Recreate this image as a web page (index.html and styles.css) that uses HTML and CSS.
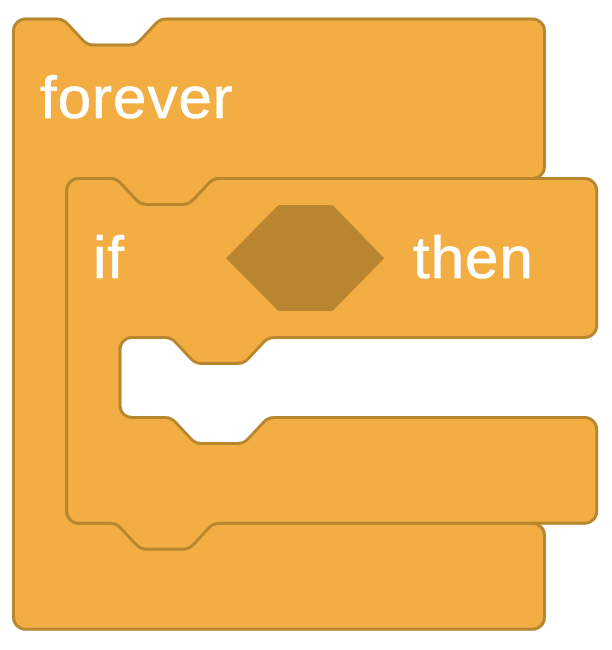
FILE: index.html
```html
<!DOCTYPE html>
<html lang="en">
<head>
<meta charset="utf-8">
<title>forever / if then</title>
<link rel="stylesheet" href="styles.css">
</head>
<body>
<div class="canvas">
  <svg class="blocks" width="612" height="650" viewBox="0 0 612 650" xmlns="http://www.w3.org/2000/svg">
    <path class="block" d="M 13.5 31 A 12 12 0 0 1 25.5 19 H 57
      c 6.06,0 9.09,3.25 12.12,6.5 l 12.12,13 c 3.03,3.25 6.06,6.5 12.12,6.5 h 36.36 c 6.06,0 9.09,-3.25 12.12,-6.5 l 12.12,-13 c 3.03,-3.25 6.06,-6.5 12.12,-6.5
      H 532.5 A 12 12 0 0 1 544.5 31 V 166.5 A 12 12 0 0 1 532.5 178.5 H 219.3
      c -6.06,0 -9.09,3.25 -12.12,6.5 l -12.12,13 c -3.03,3.25 -6.06,6.5 -12.12,6.5 h -36.36 c -6.06,0 -9.09,-3.25 -12.12,-6.5 l -12.12,-13 c -3.03,-3.25 -6.06,-6.5 -12.12,-6.5
      H 78.7 A 12 12 0 0 0 66.7 190.5 V 511.3 A 12 12 0 0 0 78.7 523.3 H 532.5 A 12 12 0 0 1 544.5 535.3 V 617.3 A 12 12 0 0 1 532.5 629.3 H 25.5 A 12 12 0 0 1 13.5 617.3 Z"/>
    <text class="label" x="40" y="118">forever</text>

    <path class="block" d="M 66.7 190.5 A 12 12 0 0 1 78.7 178.5 H 110.2
      c 6.06,0 9.09,3.25 12.12,6.5 l 12.12,13 c 3.03,3.25 6.06,6.5 12.12,6.5 h 36.36 c 6.06,0 9.09,-3.25 12.12,-6.5 l 12.12,-13 c 3.03,-3.25 6.06,-6.5 12.12,-6.5
      H 584.7 A 12 12 0 0 1 596.7 190.5 V 325.5 A 12 12 0 0 1 584.7 337.5 H 274.1
      c -6.06,0 -9.09,3.25 -12.12,6.5 l -12.12,13 c -3.03,3.25 -6.06,6.5 -12.12,6.5 h -36.36 c -6.06,0 -9.09,-3.25 -12.12,-6.5 l -12.12,-13 c -3.03,-3.25 -6.06,-6.5 -12.12,-6.5
      H 132 A 12 12 0 0 0 120 349.5 V 405.5 A 12 12 0 0 0 132 417.5 H 165
      c 6.06,0 9.09,3.25 12.12,6.5 l 12.12,13 c 3.03,3.25 6.06,6.5 12.12,6.5 h 36.36 c 6.06,0 9.09,-3.25 12.12,-6.5 l 12.12,-13 c 3.03,-3.25 6.06,-6.5 12.12,-6.5
      H 584.7 A 12 12 0 0 1 596.7 429.5 V 511.3 A 12 12 0 0 1 584.7 523.3 H 219.3
      c -6.06,0 -9.09,3.25 -12.12,6.5 l -12.12,13 c -3.03,3.25 -6.06,6.5 -12.12,6.5 h -36.36 c -6.06,0 -9.09,-3.25 -12.12,-6.5 l -12.12,-13 c -3.03,-3.25 -6.06,-6.5 -12.12,-6.5
      H 78.7 A 12 12 0 0 1 66.7 511.3 Z"/>
    <text class="label" x="93" y="277.5">if</text>
    <polygon class="slot" points="226,258.3 278.5,205 332.7,205 384.3,258.3 332.7,311 278.5,311"/>
    <text class="label" x="413" y="277.5">then</text>
  </svg>
</div>
</body>
</html>
```

FILE: styles.css
```css
html, body {
  margin: 0;
  padding: 0;
  background: #ffffff;
}

.canvas {
  width: 612px;
  height: 650px;
  position: relative;
}

.blocks {
  display: block;
}

.block {
  fill: #f2ae42;
  stroke: #b8862f;
  stroke-width: 3;
  stroke-linejoin: round;
}

.slot {
  fill: #b98530;
}

.label {
  fill: #ffffff;
  stroke: #ffffff;
  stroke-width: 0.6;
  font-family: "Liberation Sans", Arial, sans-serif;
  font-size: 60px;
  font-weight: 400;
  letter-spacing: 1px;
}
```
